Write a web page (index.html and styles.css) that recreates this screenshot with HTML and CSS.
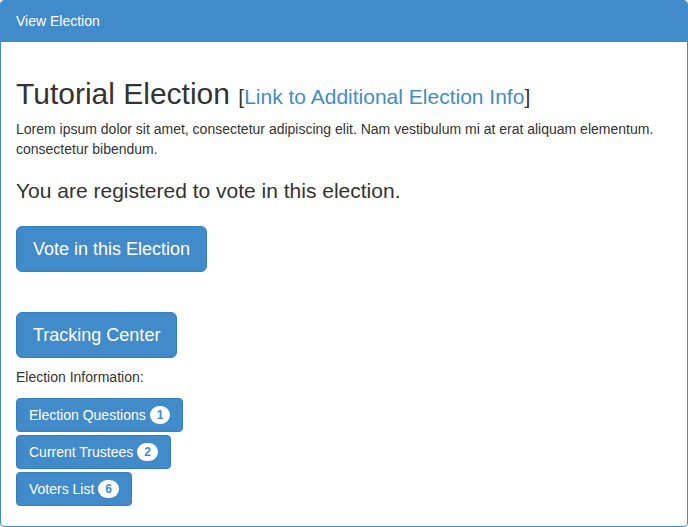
FILE: index.html
```html
<!DOCTYPE html>
<html>
<head>
<meta charset="utf-8">
<link rel="stylesheet" href="styles.css">
</head>
<body>
<div class="panel">
  <div class="panel-heading">View Election</div>
  <div class="panel-body">
    <h2 class="title">Tutorial Election <span class="info">[<a href="#">Link to Additional Election Info</a>]</span></h2>
    <p class="desc">Lorem ipsum dolor sit amet, consectetur adipiscing elit. Nam vestibulum mi at erat aliquam elementum. consectetur bibendum.</p>
    <h4 class="status">You are registered to vote in this election.</h4>
    <div class="big-actions">
      <a class="btn btn-lg" href="#">Vote in this Election</a>
      <a class="btn btn-lg" href="#">Tracking Center</a>
    </div>
    <p class="info-label">Election Information:</p>
    <div class="small-actions">
      <a class="btn" href="#">Election Questions <span class="badge">1</span></a>
      <a class="btn" href="#">Current Trustees <span class="badge">2</span></a>
      <a class="btn" href="#">Voters List <span class="badge">6</span></a>
    </div>
  </div>
</div>
</body>
</html>
```
FILE: styles.css
```css
* { box-sizing: border-box; }
html, body { margin: 0; padding: 0; }
body {
  font-family: "Liberation Sans", Arial, sans-serif;
  font-size: 14px;
  line-height: 1.428571;
  color: #333;
  background: #fff;
}
.panel {
  width: 688px;
  height: 527px;
  border: 1px solid #428bca;
  border-radius: 4px;
  background: #fff;
}
.panel-heading {
  background: #428bca;
  color: #fff;
  padding: 11px 15px 9px;
  border-bottom: 1px solid #428bca;
  border-radius: 3px 3px 0 0;
  height: 41px;
}
.panel-body {
  padding: 15px;
}
.title {
  font-size: 30px;
  font-weight: 500;
  line-height: 1.1;
  margin: 20px 0 10px;
}
.info {
  font-size: 21px;
}
.info a { color: #428bca; text-decoration: none; }
.desc { margin: 0 0 10px; }
.status {
  font-size: 21px;
  font-weight: 500;
  line-height: 1.1;
  margin: 19px 0 0;
}
.big-actions {
  display: flex;
  flex-direction: column;
  align-items: flex-start;
  gap: 40px;
  margin-top: 24px;
}
.btn {
  display: inline-block;
  background: #428bca;
  border: 1px solid #357ebd;
  color: #fff;
  text-decoration: none;
  padding: 6px 12px;
  font-size: 14px;
  line-height: 20px;
  border-radius: 4px;
  white-space: nowrap;
}
.btn-lg {
  padding: 10px 16px;
  font-size: 18px;
  line-height: 24px;
  border-radius: 6px;
}
.info-label { margin: 10px 0 10px; }
.small-actions {
  display: flex;
  flex-direction: column;
  align-items: flex-start;
  gap: 3px;
}
.badge {
  display: inline-block;
  min-width: 10px;
  padding: 3px 7px;
  font-size: 12px;
  font-weight: bold;
  line-height: 1;
  color: #428bca;
  background: #fff;
  border-radius: 10px;
  text-align: center;
  vertical-align: baseline;
  position: relative;
  top: -1px;
}
```
